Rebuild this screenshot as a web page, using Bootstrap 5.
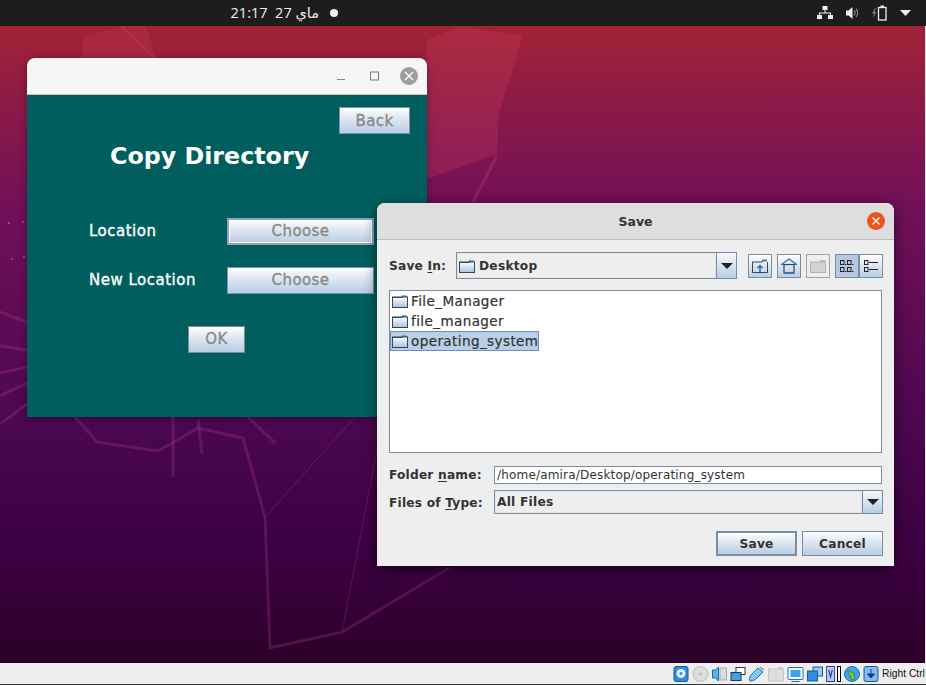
<!doctype html>
<html lang="en">
<head>
  <meta charset="utf-8">
  <meta name="viewport" content="width=device-width, initial-scale=1">
  <title>Copy Directory</title>
  <link href="https://cdn.jsdelivr.net/npm/bootstrap@5.3.0/dist/css/bootstrap.min.css" rel="stylesheet">
  <style>
    html, body { height: 685px; overflow: hidden; }
    body { font-family: "DejaVu Sans", sans-serif; background: #000; }
    .screen { height: 685px; width: 926px; }

    .topbar { height: 26px; background: #1d1d1d; color: #eee; flex: none; }
    .clock { width: 88px; margin-left: 231px; font-size: 14.5px; white-space: nowrap; font-family: "Open Sans", "DejaVu Sans", sans-serif; letter-spacing: .6px; }
    .rec-dot { width: 8px; height: 8px; border-radius: 50%; background: #f2f2f2; margin-left: 11px; }
    .tray { margin-right: 15px; gap: 13px; }

    .desktop { background: linear-gradient(#a32335 0%, #8c1a48 12%, #721058 28%, #4c0850 61%, #3a0040 84%, #2c0028 100%); border-right: 1px solid #e4e4e4; }
    .wall { position: absolute; inset: 0; }

    .win { position: absolute; }
    .win-copy { left: 27px; top: 32px; width: 400px; height: 359px; border-radius: 8px 8px 0 0; box-shadow: 0 2px 8px rgba(0,0,0,.3); overflow: hidden; }
    .copy-title { height: 37px; background: #f6f6f6; border-bottom: 1px solid #c4c4c4; padding-right: 9px; gap: 16px; }
    .copy-title .min-icon { margin-right: 4px; }
    .copy-body { height: 322px; background: #005f5e; padding-top: 12px; color: #fff; }
    .copy-head { font-size: 23.75px; font-weight: 700; line-height: 28px; margin: 8px 0 0 83px; white-space: nowrap; }
    .copy-row { margin-left: 62px; height: 27px; font-size: 15px; letter-spacing: .5px; -webkit-text-stroke: .35px; }
    .copy-row span { width: 138px; }
    .gr-close { width: 18px; height: 18px; border-radius: 50%; background: #9d9d9d; }

    .jbtn { padding: 0; border-radius: 0; border: 1px solid #7f93a8; background: linear-gradient(#fff 0%, #e6edf5 30%, #b9cde2 100%); color: #8a8a8a; font-size: 15px; line-height: 1; letter-spacing: .4px; -webkit-text-stroke: .35px; }
    .jbtn-back { width: 71px; height: 27px; margin-right: 17px; padding-top: 1px; }
    .jbtn-choose { width: 147px; height: 27px; }
    .jbtn-focus { box-shadow: inset 0 0 0 1px #fff; border: 2px solid #8fa3b9; }
    .jbtn-ok { width: 57px; height: 27px; margin-left: 161px; margin-top: 32px; border-color: #7d8b99; }
    .jbtn-dark { color: #333; font-size: 12.2px; font-weight: 700; letter-spacing: .25px; width: 81px; height: 25px; border-color: #7a8ea3; -webkit-text-stroke: 0; }
    .jbtn-default { border: 2px solid #7a8ea3; }

    .win-save { left: 377px; top: 177px; width: 517px; height: 363px; border-radius: 8px 8px 0 0; background: #eee; box-shadow: 0 3px 14px rgba(0,0,0,.55); overflow: hidden; color: #333; font-size: 12.2px; }
    .save-title { height: 37px; background: #dedede; border-bottom: 1px solid #bdbdbd; font-weight: 700; font-size: 12.5px; position: relative; padding-top: 3px; }
    .or-close { position: absolute; right: 9px; top: 9px; width: 18px; height: 18px; border-radius: 50%; background: #e95420; }
    .save-body { padding: 12px 11px 0 12px; }
    .lbl { font-weight: 700; letter-spacing: .2px; white-space: nowrap; padding-top: 1px; }
    .lbl u { text-underline-offset: 2px; }
    .lbl-in { width: 67px; }
    .lbl-name { width: 105px; }

    .jcombo { border: 1px solid #7a8ea3; background: #eee; height: 27px; font-weight: 700; }
    .combo-in { width: 281px; }
    .combo-type { width: 389px; height: 24px; }
    .combo-text { padding-left: 2px; gap: 4px; letter-spacing: .25px; box-shadow: inset 0 0 0 1px #e4e4e4; }
    .combo-in .combo-text { padding-top: 1px; }
    .combo-arrow { width: 20px; border-left: 1px solid #7a8ea3; background: linear-gradient(#f6f8fb, #b9cde2); }
    .tri { width: 0; height: 0; border-left: 6px solid transparent; border-right: 6px solid transparent; border-top: 6px solid #222; }

    .tb-btn { width: 24px; height: 24px; border: 1px solid #7a8ea3; background: linear-gradient(#fff, #b9cde2); }
    .tb-off { border-color: #a2a2a2; background: #eee; }
    .tb-on { background: #b4c9e0; }
    .tools { margin-left: 11px; gap: 5px; }

    .file-list { height: 163px; margin-top: 11px; width: 493px; border: 1px solid #7a8ea3; border-radius: 0; background: #fff; padding-top: 0; }
    .file-item { height: 20px; padding: 0 1px; border: 0; background: transparent; color: #333; font-size: 13.5px; gap: 2px; letter-spacing: .42px; width: max-content; border-radius: 0 !important; white-space: nowrap; -webkit-text-stroke: .2px; }
    .file-sel { background: #b8cfe5; outline: 1px solid #6a8ec0; outline-offset: -1px; }

    .name-input { height: 18px; width: 388px; padding: 0 2px; border: 1px solid #7a8ea3; border-radius: 0; font-size: 12px; color: #333; letter-spacing: .18px; padding-top: 1px; }
    .name-row { margin-top: 12px; }
    .type-row { margin-top: 6px; }
    .type-row .lbl { padding-top: 2px; }
    .btn-row { margin-top: 17px; gap: 5px; }

    .statusbar { height: 22px; background: #eee; flex: none; border-bottom: 1px solid #333; font-family: "Liberation Sans", sans-serif; font-size: 10.3px; color: #111; padding-left: 673px; gap: 3px; white-space: nowrap; }
    .statusbar svg { flex: none; }
    .caps-bar { width: 4px; height: 16px; border: 1px solid #000; background: #fff; margin-left: -1px; flex: none; }
  </style>
</head>
<body>
  <svg width="0" height="0" class="d-block">
    <defs>
      <symbol id="folder" viewBox="0 0 16 14">
        <path d="M10 1.500h5v2h-5z" fill="#5a83b5"/>
        <rect x=".5" y="3" width="15" height="10.500" fill="url(#fgrad)" stroke="#33475c"/>
        <path d="M1 3.500h9l1-2" fill="none" stroke="#33475c"/>
      </symbol>
      <linearGradient id="fgrad" x1="0" y1="0" x2="0" y2="1">
        <stop offset="0" stop-color="#fff"/><stop offset="1" stop-color="#a9c3de"/>
      </linearGradient>
    </defs>
  </svg>

  <div class="screen d-flex flex-column">
    <div class="topbar d-flex align-items-center">
      <div class="clock" dir="rtl">ماي 27 &nbsp;21:17</div>
      <div class="rec-dot"></div>
      <div class="tray ms-auto d-flex align-items-center">
        <svg width="16" height="14" viewBox="0 0 16 14" fill="#eee"><rect x="5.500" y="0" width="5" height="4"/><rect x="0" y="9" width="5" height="4"/><rect x="11" y="9" width="5" height="4"/><path d="M7.500 4h1v2.500H14V9h-1V7.500H3V9H2V6.500h5.500z"/></svg>
        <svg width="13" height="14" viewBox="0 0 13 14"><path d="M0 4.500h2.500L6.500 1v12l-4-3.500H0z" fill="#eee"/><path d="M8 4.500a3.500 3.500 0 0 1 0 5M10 3a6 6 0 0 1 0 8" fill="none" stroke="#888" stroke-width="1.200"/></svg>
        <svg width="15" height="16" viewBox="0 0 15 16"><path d="M3 3 0 8.500h2L1 13l3.500-6h-2L4 3z" fill="#777"/><rect x="6.500" y="2.500" width="7.500" height="12.500" fill="none" stroke="#eee" stroke-width="1.300"/><rect x="8.500" y=".5" width="3.500" height="1.500" fill="#eee"/></svg>
        <svg width="11" height="6" viewBox="0 0 11 6" fill="#eee"><path d="M0 0h11L5.500 6z"/></svg>
      </div>
    </div>

    <div class="desktop flex-grow-1 position-relative">
      <svg class="wall" width="925" height="637" viewBox="0 26 925 637" fill="none">
        <path d="M83 37 124 26h22l9 32H83z" fill="#d04060" fill-opacity=".2"/>
        <path d="M427 40 460 26 523 36 499 113 497 154 427 179z" fill="#d04060" fill-opacity=".25"/>
        <g stroke="#c040a0" stroke-opacity=".25" stroke-width="3">
          <path d="M75 417 97 442 158 451 198 428 243 438 265 517 270 648 342 632 449 568"/>
          <path d="M173 417V477M198 420 202 454M248 417 275 443"/>
          <path d="M0 312 27 322M0 346 27 350M0 373 27 367M0 396 27 383M0 424 27 404"/>
          <path d="M497 156 473 202" stroke="#d04060" stroke-opacity=".3"/>
        </g>
        <path d="M265 517 355 417M342 632 377 450" stroke="#c040a0" stroke-opacity=".3"/>
        <path d="M121 26 155 58" stroke="#c8404e" stroke-opacity=".4" stroke-width="2"/>
        <g fill="#d080a8" fill-opacity=".6">
          <circle cx="9" cy="223" r="1"/><circle cx="23" cy="222" r="1"/><circle cx="12" cy="259" r="1"/><circle cx="24" cy="257" r="1"/>
        </g>
      </svg>

      <div class="win win-copy">
        <div class="copy-title d-flex align-items-center justify-content-end">
          <svg class="min-icon" width="10" height="10" viewBox="0 0 10 10"><path d="M1 8.500h8" stroke="#888"/></svg>
          <svg width="18" height="10" viewBox="0 0 18 10"><rect x="4.500" y="1" width="8" height="8" fill="none" stroke="#777"/></svg>
          <div class="gr-close d-flex align-items-center justify-content-center">
            <svg width="10" height="10" viewBox="0 0 10 10"><path d="M1 1l8 8M9 1l-8 8" stroke="#fff" stroke-width="1.300"/></svg>
          </div>
        </div>
        <div class="copy-body">
          <div class="d-flex justify-content-end"><button class="btn jbtn jbtn-back">Back</button></div>
          <div class="copy-head">Copy Directory</div>
          <div class="copy-row d-flex align-items-center" style="margin-top:48px"><span>Location</span><button class="btn jbtn jbtn-choose jbtn-focus">Choose</button></div>
          <div class="copy-row d-flex align-items-center" style="margin-top:22px"><span>New Location</span><button class="btn jbtn jbtn-choose">Choose</button></div>
          <button class="btn jbtn jbtn-ok d-block">OK</button>
        </div>
      </div>

      <div class="win win-save">
        <div class="save-title d-flex align-items-center justify-content-center">
          Save
          <div class="or-close d-flex align-items-center justify-content-center">
            <svg width="10" height="10" viewBox="0 0 10 10"><path d="M1.500 1.500l7 7M8.500 1.500l-7 7" stroke="#fff" stroke-width="1.300"/></svg>
          </div>
        </div>
        <div class="save-body">
          <div class="d-flex align-items-center">
            <div class="lbl lbl-in">Save <u>I</u>n:</div>
            <div class="jcombo combo-in d-flex">
              <div class="combo-text flex-grow-1 d-flex align-items-center"><svg width="16" height="14"><use href="#folder"/></svg>Desktop</div>
              <div class="combo-arrow d-flex align-items-center justify-content-center"><div class="tri"></div></div>
            </div>
            <div class="tools d-flex">
              <div class="tb-btn d-flex align-items-center justify-content-center">
                <svg width="16" height="14" viewBox="0 0 16 14"><path d="M10 .5h5v2h-5z" fill="#4a7ab5"/><path d="M.5 3h9.500l1-1M.5 3v10.500h15V3" fill="none" stroke="#33475c"/><path d="M8 13V7M5.500 9 8 6.500 10.500 9" fill="none" stroke="#2a6fb5" stroke-width="1.500"/></svg>
              </div>
              <div class="tb-btn d-flex align-items-center justify-content-center">
                <svg width="16" height="16" viewBox="0 0 16 16"><path d="M.5 6.500 8 1l7.500 5.500z" fill="none" stroke="#2a6fb5" stroke-width="1.200"/><rect x="3" y="6.500" width="10" height="8.500" fill="none" stroke="#33475c" stroke-width="1.200"/><path d="M3 15h10" stroke="#2a6fb5" stroke-width="1.500"/></svg>
              </div>
              <div class="tb-btn tb-off d-flex align-items-center justify-content-center">
                <svg width="16" height="14" viewBox="0 0 16 14"><path d="M10 1h5v2h-5z" fill="#bcbcbc"/><rect x=".5" y="3" width="15" height="10.500" fill="#d2d2d2" stroke="#b4b4b4"/></svg>
              </div>
              <div class="d-flex">
                <div class="tb-btn tb-on d-flex align-items-center justify-content-center">
                  <svg width="16" height="14" viewBox="0 0 16 14" fill="none" stroke="#222"><rect x="1.500" y="1.500" width="3.500" height="4"/><rect x="8.500" y="1.500" width="3.500" height="4"/><rect x="1.500" y="8.500" width="3.500" height="4"/><rect x="8.500" y="8.500" width="3.500" height="4"/><path d="M6 5.500h1.500M13 5.500h1.500M6 12.500h1.500M13 12.500h1.500"/></svg>
                </div>
                <div class="tb-btn d-flex align-items-center justify-content-center">
                  <svg width="16" height="14" viewBox="0 0 16 14" fill="none" stroke="#222"><rect x="1.500" y="1.500" width="3.500" height="4"/><rect x="1.500" y="8.500" width="3.500" height="4"/><path d="M6 3.500h9M6 10.500h9"/></svg>
                </div>
              </div>
            </div>
          </div>

          <div class="list-group file-list">
            <div class="list-group-item file-item d-flex align-items-center"><svg width="18" height="14"><use href="#folder"/></svg>File_Manager</div>
            <div class="list-group-item file-item d-flex align-items-center"><svg width="18" height="14"><use href="#folder"/></svg>file_manager</div>
            <div class="list-group-item file-item file-sel d-flex align-items-center"><svg width="18" height="14"><use href="#folder"/></svg>operating_system</div>
          </div>

          <div class="name-row d-flex align-items-center">
            <div class="lbl lbl-name">Folder <u>n</u>ame:</div>
            <input class="form-control name-input" value="/home/amira/Desktop/operating_system">
          </div>
          <div class="type-row d-flex align-items-center">
            <div class="lbl lbl-name">Files of <u>T</u>ype:</div>
            <div class="jcombo combo-type d-flex">
              <div class="combo-text flex-grow-1 d-flex align-items-center">All Files</div>
              <div class="combo-arrow d-flex align-items-center justify-content-center"><div class="tri"></div></div>
            </div>
          </div>
          <div class="btn-row d-flex justify-content-end">
            <button class="btn jbtn jbtn-dark jbtn-default">Save</button>
            <button class="btn jbtn jbtn-dark">Cancel</button>
          </div>
        </div>
      </div>
    </div>

    <div class="statusbar d-flex align-items-center">
      <svg width="16" height="16" viewBox="0 0 15 16"><rect x=".5" y=".5" width="14" height="15" rx="2" fill="#2f8de0" stroke="#155a9c"/><circle cx="7.500" cy="7.500" r="4.500" fill="#dff0ff"/><circle cx="7.500" cy="7.500" r="1.500" fill="#2f8de0"/></svg>
      <svg width="17" height="16" viewBox="0 0 16 16"><circle cx="8" cy="8" r="7.500" fill="#ddd" stroke="#bbb"/><circle cx="8" cy="8" r="1.500" fill="#bbb"/></svg>
      <svg width="15" height="16" viewBox="0 0 15 16"><path d="M.5 4h3l3-3v14l-3-3h-3z" fill="#58b4ee" stroke="#1a70b0"/><rect x="8" y="2" width="6.500" height="12" fill="#ddd" stroke="#aaa"/></svg>
      <svg width="16" height="16" viewBox="0 0 15 16"><rect x="5.500" y="1.500" width="9" height="7" fill="#fff" stroke="#334"/><rect x=".5" y="6.500" width="10" height="8" fill="#3ba3ea" stroke="#334"/></svg>
      <svg width="16" height="16" viewBox="0 0 16 16"><path d="M1 15c-1-3 0-5 2-7l6-6 5 4-6 6c-2 2-4 3-7 3z" fill="#7fcbf5" stroke="#1a70b0"/><path d="M11 1l4 3" stroke="#aaa" stroke-width="2"/></svg>
      <svg width="16" height="16" viewBox="0 0 16 16"><path d="M10 1h5v2h-5z" fill="#ccc"/><rect x=".5" y="3" width="15" height="12" fill="#ddd" stroke="#c4c4c4"/></svg>
      <svg width="17" height="16" viewBox="0 0 16 16"><rect x=".5" y="1.500" width="15" height="12" rx="1" fill="#fff" stroke="#1a70b0"/><rect x="3" y="4" width="10" height="7" fill="#3ba3ea"/><path d="M4 15.500h8" stroke="#1a70b0"/></svg>
      <svg width="16" height="16" viewBox="0 0 16 16"><rect x="6" y="1" width="9.500" height="9" fill="#9cc8ee" stroke="#1a5a94"/><rect x=".5" y="5" width="10" height="10" fill="#2f8de0" stroke="#1a5a94"/></svg>
      <svg width="9" height="16" viewBox="0 0 10 16" preserveAspectRatio="none"><rect x=".5" y=".5" width="9" height="15" fill="#b8c8ee" stroke="#2a3f9c"/><path d="M3 4l2 7 2-7" fill="none" stroke="#2a3f9c" stroke-width="1.300"/></svg>
      <div class="caps-bar"></div>
      <svg width="16" height="16" viewBox="0 0 16 16"><circle cx="8" cy="8" r="7.500" fill="#3ba3ea" stroke="#1a70b0"/><path d="M3 4l6 3 2 6-3 1-2-5z" fill="#8ccc3a" stroke="#4c8a1a"/></svg>
      <svg width="16" height="16" viewBox="0 0 15 16"><rect x=".5" y=".5" width="14" height="15" rx="2" fill="#7fbdf0" stroke="#155a9c"/><path d="M7.500 3v6M4 8l3.500 4L11 8z" fill="#123e78" stroke="#123e78"/></svg>
      <span>Right Ctrl</span>
    </div>
  </div>

  <script src="https://cdn.jsdelivr.net/npm/bootstrap@5.3.0/dist/js/bootstrap.bundle.min.js"></script>
</body>
</html>
